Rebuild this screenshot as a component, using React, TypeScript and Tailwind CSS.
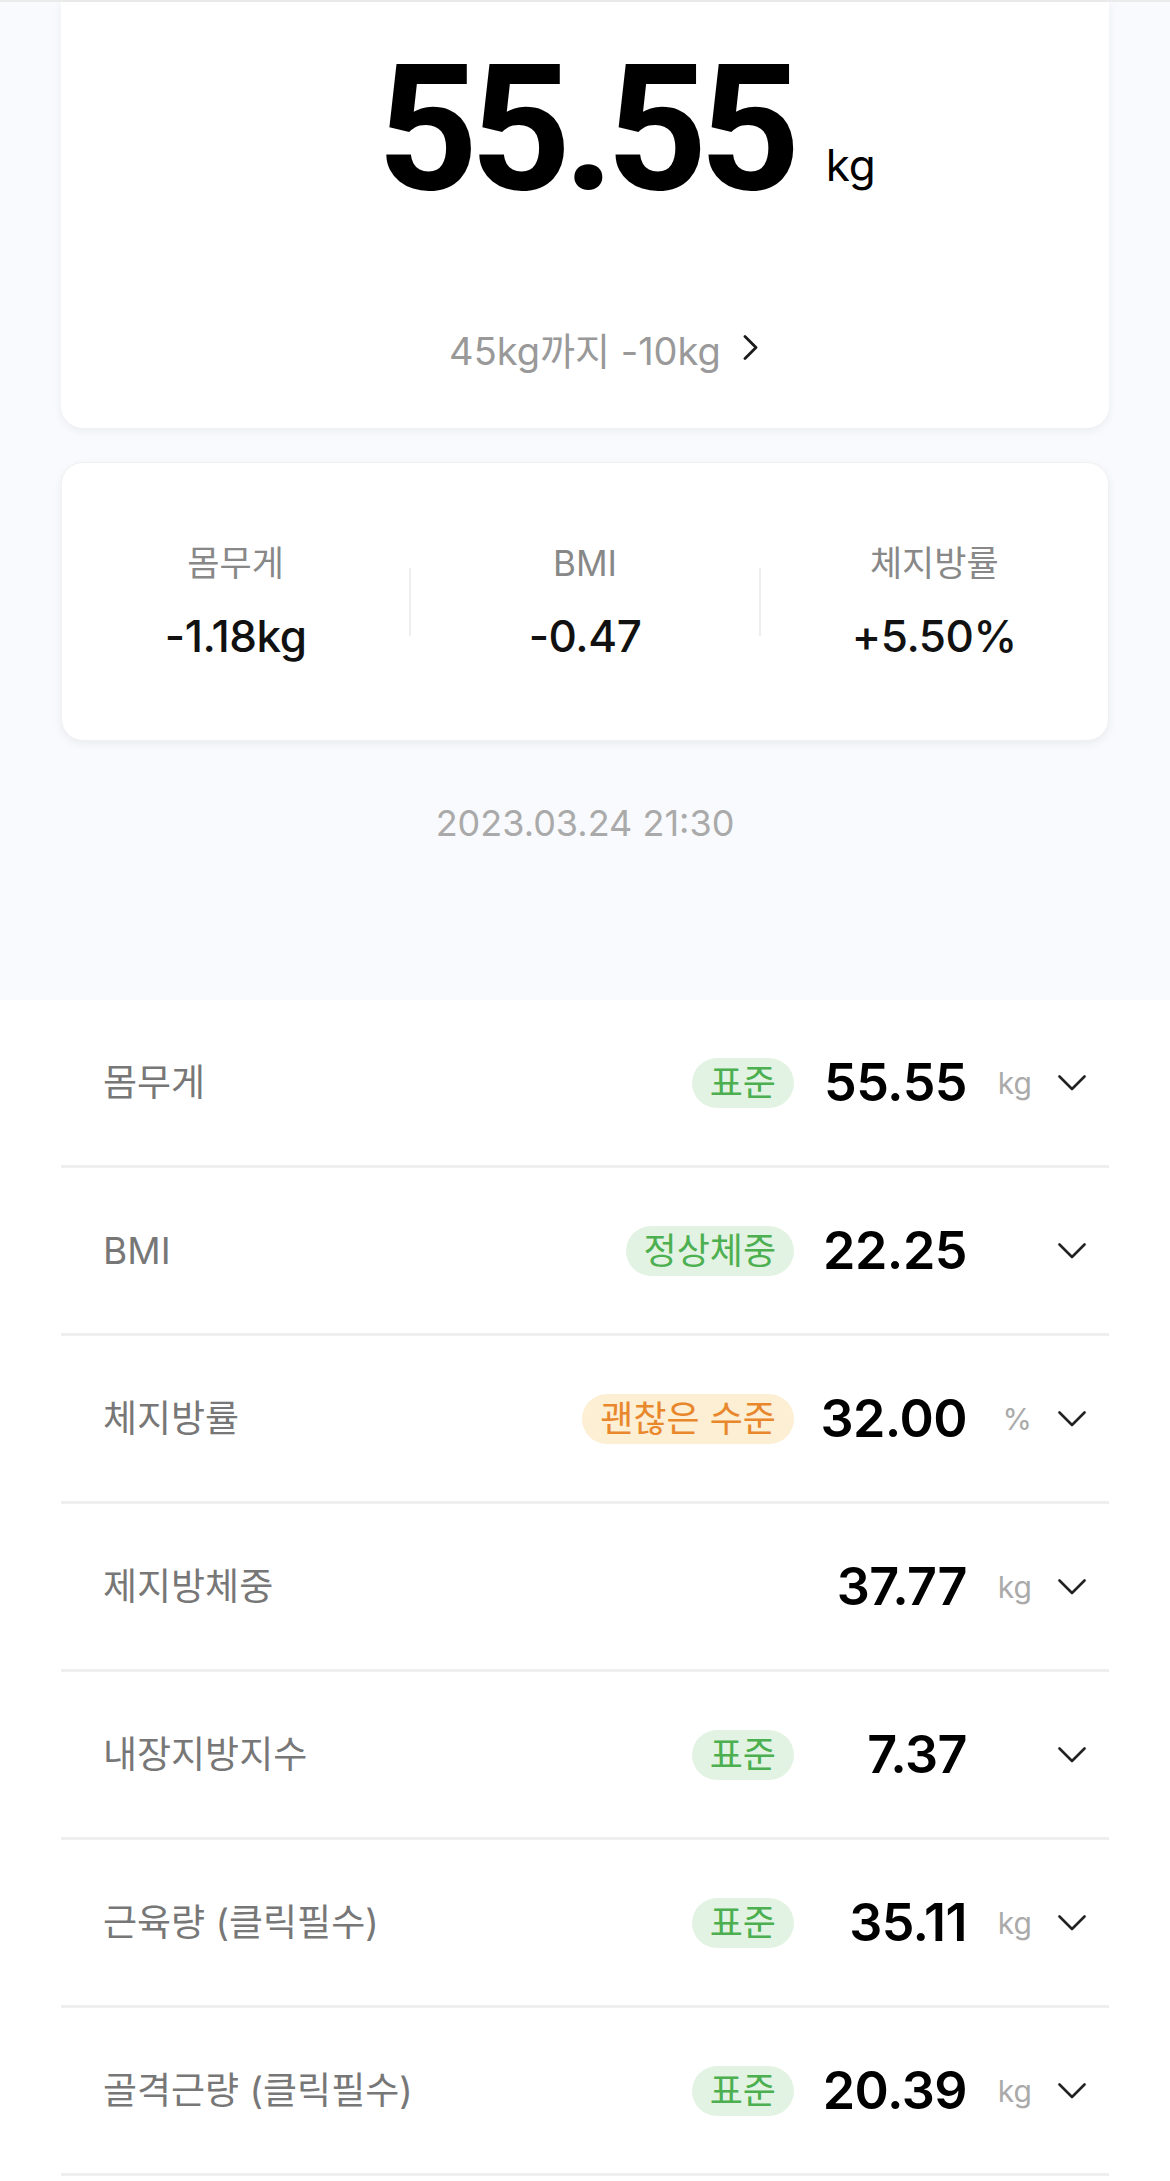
import React from 'react'

type Row = {
  label: string
  badge?: { text: string; tone: 'green' | 'orange' }
  value: string
  unit?: string
}

const rows: Row[] = [
  { label: '몸무게', badge: { text: '표준', tone: 'green' }, value: '55.55', unit: 'kg' },
  { label: 'BMI', badge: { text: '정상체중', tone: 'green' }, value: '22.25' },
  { label: '체지방률', badge: { text: '괜찮은 수준', tone: 'orange' }, value: '32.00', unit: '%' },
  { label: '제지방체중', value: '37.77', unit: 'kg' },
  { label: '내장지방지수', badge: { text: '표준', tone: 'green' }, value: '7.37' },
  { label: '근육량 (클릭필수)', badge: { text: '표준', tone: 'green' }, value: '35.11', unit: 'kg' },
  { label: '골격근량 (클릭필수)', badge: { text: '표준', tone: 'green' }, value: '20.39', unit: 'kg' },
]

function ChevronDown() {
  return (
    <svg width="28" height="16" viewBox="0 0 28 16" fill="none" className="shrink-0">
      <polyline points="1.5,1.5 14,14 26.5,1.5" stroke="#222" strokeWidth="2.6" strokeLinecap="round" strokeLinejoin="round" />
    </svg>
  )
}

function ChevronRight() {
  return (
    <svg width="15" height="25" viewBox="0 0 15 25" fill="none">
      <polyline points="2,1.5 13,12.5 2,23.5" stroke="#1a1a1a" strokeWidth="2.8" strokeLinecap="round" strokeLinejoin="round" />
    </svg>
  )
}

function Badge({ text, tone }: { text: string; tone: 'green' | 'orange' }) {
  const cls =
    tone === 'green'
      ? 'bg-[#e3f3e3] text-[#4caf50]'
      : 'bg-[#fcefd3] text-[#e8872c]'
  return (
    <span className={`h-[50px] px-[18px] rounded-full flex items-center text-[36px] leading-none ${cls}`}>
      {text}
    </span>
  )
}

function Stat({ label, value }: { label: string; value: string }) {
  return (
    <div className="flex-1 flex flex-col items-center">
      <span className="text-[35px] leading-none text-[#888]">{label}</span>
      <span className="mt-[33px] text-[44px] leading-none font-medium text-[#111] tracking-[-0.01em]">{value}</span>
    </div>
  )
}

export default function App() {
  return (
    <div className="w-[1170px] min-h-[2181px] bg-white font-['Inter','Noto_Sans_CJK_KR',sans-serif]">
      <div className="bg-[#f9fafd] h-[1000px]">
        <div className="h-[2px] bg-[#ebebeb]" />
        <div className="px-[61px]">
          <div className="h-[426px] bg-white rounded-b-[22px] shadow-[0_3px_10px_rgba(0,0,0,0.06)] flex flex-col items-center">
            <div className="relative mt-[39px]">
              <span className="block font-['Roboto',sans-serif] text-[176px] leading-none font-bold text-black tracking-[-0.045em]">
                55.55
              </span>
              <span className="absolute left-[calc(100%+33px)] bottom-[30px] text-[44px] leading-none text-black">kg</span>
            </div>
            <div className="relative mt-[115px]">
              <span className="block text-[38px] leading-none text-[#999]">45kg까지 -10kg</span>
              <span className="absolute left-[calc(100%+22px)] top-[3px]">
                <ChevronRight />
              </span>
            </div>
          </div>

          <div className="mt-[34px] h-[279px] bg-white rounded-[22px] shadow-[0_3px_10px_rgba(0,0,0,0.06)] border border-[#f1f1f1] flex items-center">
            <Stat label="몸무게" value="-1.18kg" />
            <div className="w-[2px] h-[68px] bg-[#eeeeee]" />
            <Stat label="BMI" value="-0.47" />
            <div className="w-[2px] h-[68px] bg-[#eeeeee]" />
            <Stat label="체지방률" value="+5.50%" />
          </div>

          <div className="mt-[64px] text-center text-[36px] leading-none text-[#aaa]">2023.03.24 21:30</div>
        </div>
      </div>

      <div className="px-[61px]">
        {rows.map((r) => (
          <div key={r.label} className="h-[168px] border-b-[3px] border-[#efefef] flex items-center pl-[42px] pr-[23px]">
            <span className="flex-1 text-[37px] leading-none text-[#777]">{r.label}</span>
            {r.badge && <Badge text={r.badge.text} tone={r.badge.tone} />}
            <span className="w-[173px] text-right text-[52px] leading-none font-semibold text-black tracking-[-0.01em]">
              {r.value}
            </span>
            <span className="w-[65px] text-right text-[30px] leading-none text-[#aaa]">{r.unit ?? ''}</span>
            <span className="ml-[26px] flex items-center">
              <ChevronDown />
            </span>
          </div>
        ))}
      </div>
    </div>
  )
}
